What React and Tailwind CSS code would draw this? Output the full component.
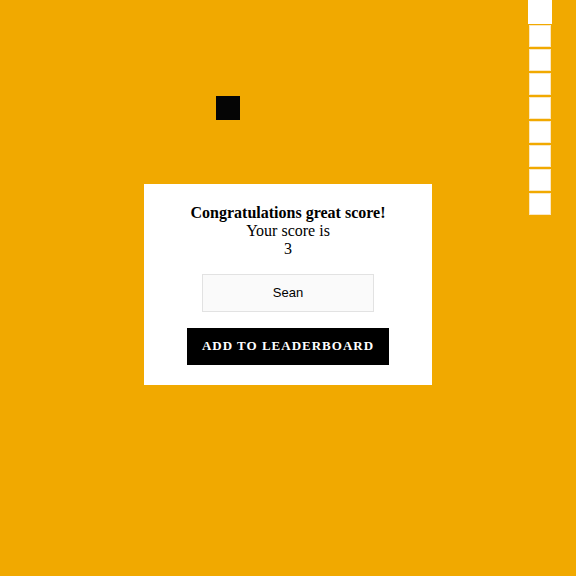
import React, { useState } from "react";

const BODY = [1, 2, 3, 4, 5, 6, 7, 8];

export default function App() {
  const [name, setName] = useState("Sean");

  return (
    <div className="relative w-[576px] h-[576px] bg-[#f1a900] overflow-hidden flex items-center justify-center pb-2">
      {/* snake head */}
      <div className="absolute left-[528px] top-0 w-6 h-6 bg-white" />
      {/* snake body */}
      {BODY.map((i) => (
        <div
          key={i}
          className="absolute left-[529px] w-[22px] h-[22px] bg-white border border-[#fbe8c2]"
          style={{ top: 1 + i * 24 }}
        />
      ))}
      {/* food */}
      <div className="absolute left-[216px] top-[96px] w-6 h-6 bg-[#050505]" />

      {/* game over card */}
      <div className="w-[288px] bg-white flex flex-col items-center pt-5 pb-5 font-['Liberation_Serif',serif] text-black">
        <div className="text-center text-base leading-[18px]">
          <p className="font-bold">Congratulations great score!</p>
          <p>Your score is</p>
          <p>3</p>
        </div>
        <input
          value={name}
          onChange={(e) => setName(e.target.value)}
          className="mt-4 w-[172px] h-[38px] bg-[#fafafa] border border-[#e2e2e2] text-center text-[13px] font-['Liberation_Sans',Arial,sans-serif] outline-none"
        />
        <button className="mt-4 w-[202px] h-[37px] bg-black text-white font-bold text-[13px] tracking-[1px] uppercase">
          Add to leaderboard
        </button>
      </div>
    </div>
  );
}
